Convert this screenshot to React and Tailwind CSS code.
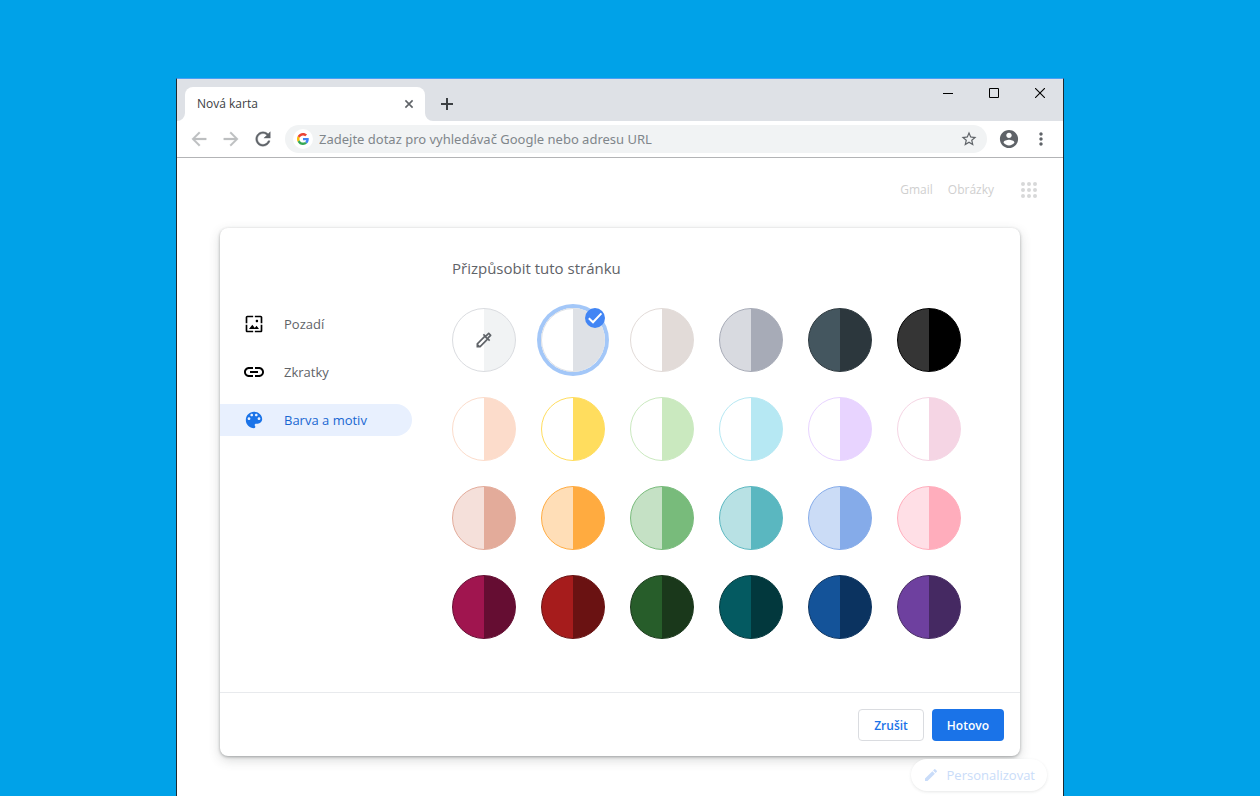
// App.jsx
import { useState } from "react";
import { MdEdit, MdLink, MdMoreVert, MdOutlineColorize, MdStarBorder, MdWallpaper } from "react-icons/md";

const SWATCHES = [
  { id: "custom", name: "Vlastní barva", left: "#ffffff", right: "#f1f3f4", border: "#dadce0" },
  { id: "default", name: "Výchozí barva", left: "#ffffff", right: "#dee1e6" },
  { id: "warm-grey", name: "Teplá šedá", left: "#ffffff", right: "#e2dbd8" },
  { id: "cool-grey", name: "Studená šedá", left: "#d8dae0", right: "#a7abb7" },
  { id: "midnight", name: "Půlnoční modrá", left: "#44565f", right: "#2c373d" },
  { id: "black", name: "Černá", left: "#353535", right: "#000000" },
  { id: "beige", name: "Béžová", left: "#ffffff", right: "#fcdccb" },
  { id: "yellow", name: "Žlutá", left: "#ffffff", right: "#ffdd5e" },
  { id: "light-green", name: "Světle zelená", left: "#ffffff", right: "#cae9bf" },
  { id: "light-aqua", name: "Světle tyrkysová", left: "#ffffff", right: "#b6e8f3" },
  { id: "light-purple", name: "Světle fialová", left: "#ffffff", right: "#e8d4ff" },
  { id: "light-pink", name: "Světle růžová", left: "#ffffff", right: "#f5d5e4" },
  { id: "rose", name: "Starorůžová", left: "#f5e0da", right: "#e3ab9a" },
  { id: "orange", name: "Oranžová", left: "#ffdeb7", right: "#ffab40" },
  { id: "green", name: "Zelená", left: "#c5e1c5", right: "#78bb7b" },
  { id: "aqua", name: "Tyrkysová", left: "#b8e1e4", right: "#5ab7c0" },
  { id: "blue", name: "Modrá", left: "#cbdcf6", right: "#85abe9" },
  { id: "pink", name: "Růžová", left: "#ffdfe6", right: "#ffadbc" },
  { id: "dark-pink", name: "Tmavě růžová", left: "#a0154f", right: "#650d32" },
  { id: "dark-red", name: "Tmavě červená", left: "#a61c1c", right: "#6a1212" },
  { id: "dark-green", name: "Tmavě zelená", left: "#275d2a", right: "#1a381b" },
  { id: "dark-aqua", name: "Tmavě tyrkysová", left: "#045a61", right: "#02383d" },
  { id: "dark-blue", name: "Tmavě modrá", left: "#145399", right: "#0b3360" },
  { id: "dark-purple", name: "Tmavě fialová", left: "#6e409f", right: "#452962" },
];

const PATHS = {
  back: "M20 11H7.83l5.59-5.59L12 4l-8 8 8 8 1.41-1.41L7.83 13H20v-2z",
  forward: "M12 4l-1.41 1.41L16.17 11H4v2h12.17l-5.58 5.59L12 20l8-8z",
  reload:
    "M17.65 6.35C16.2 4.9 14.21 4 12 4c-4.42 0-7.99 3.58-7.99 8s3.57 8 7.99 8c3.73 0 6.84-2.55 7.73-6h-2.08c-.82 2.33-3.04 4-5.65 4-3.31 0-6-2.69-6-6s2.69-6 6-6c1.66 0 3.14.69 4.22 1.78L13 11h7V4l-2.35 2.35z",
  profile:
    "M12 2C6.48 2 2 6.48 2 12s4.48 10 10 10 10-4.48 10-10S17.52 2 12 2zm0 3c1.66 0 3 1.34 3 3s-1.34 3-3 3-3-1.34-3-3 1.34-3 3-3zm0 14.2c-2.5 0-4.71-1.28-6-3.22.03-1.99 4-3.08 6-3.08 1.99 0 5.97 1.09 6 3.08-1.29 1.94-3.5 3.22-6 3.22z",
  palette:
    "M12 3c-4.97 0-9 4.03-9 9s4.03 9 9 9c.83 0 1.5-.67 1.5-1.5 0-.39-.15-.74-.39-1.01-.23-.26-.38-.61-.38-.99 0-.83.67-1.5 1.5-1.5H16c2.76 0 5-2.24 5-5 0-4.42-4.03-8-9-8zm-5.5 9c-.83 0-1.5-.67-1.5-1.5S5.67 9 6.5 9 8 9.67 8 10.5 7.33 12 6.5 12zm3-4C8.67 8 8 7.33 8 6.5S8.67 5 9.5 5s1.5.67 1.5 1.5S10.33 8 9.5 8zm5 0c-.83 0-1.5-.67-1.5-1.5S13.67 5 14.5 5s1.5.67 1.5 1.5S15.33 8 14.5 8zm3 4c-.83 0-1.5-.67-1.5-1.5S16.67 9 17.5 9s1.5.67 1.5 1.5-.67 1.5-1.5 1.5z",
};

function Icon({ name, stroke = 0 }) {
  return (
    <svg
      width="20"
      height="20"
      viewBox="1 1 22 22"
      fill="currentColor"
      stroke={stroke ? "currentColor" : "none"}
      strokeWidth={stroke}
      aria-hidden="true"
    >
      <path d={PATHS[name]} />
    </svg>
  );
}

const MENU = [
  { id: "background", label: "Pozadí", icon: <MdWallpaper size={20} /> },
  { id: "shortcuts", label: "Zkratky", icon: <MdLink size={24} /> },
  { id: "colors", label: "Barva a motiv", icon: <Icon name="palette" /> },
];

function GoogleLogo() {
  return (
    <svg width="12" height="12" viewBox="0 0 48 48" aria-hidden="true">
      <path fill="#EA4335" d="M24 9.5c3.54 0 6.71 1.22 9.21 3.6l6.85-6.85C35.9 2.38 30.47 0 24 0 14.62 0 6.51 5.38 2.56 13.22l7.98 6.19C12.43 13.72 17.74 9.5 24 9.5z" />
      <path fill="#4285F4" d="M46.98 24.55c0-1.57-.15-3.09-.38-4.55H24v9.02h12.94c-.58 2.96-2.26 5.48-4.78 7.18l7.73 6c4.51-4.18 7.09-10.36 7.09-17.65z" />
      <path fill="#FBBC05" d="M10.53 28.59c-.48-1.45-.76-2.99-.76-4.59s.27-3.14.76-4.59l-7.98-6.19C.92 16.46 0 20.12 0 24c0 3.88.92 7.54 2.56 10.78l7.97-6.19z" />
      <path fill="#34A853" d="M24 48c6.48 0 11.93-2.13 15.89-5.81l-7.73-6c-2.15 1.45-4.92 2.3-8.16 2.3-6.26 0-11.57-4.22-13.47-9.91l-7.98 6.19C6.51 42.62 14.62 48 24 48z" />
    </svg>
  );
}

function AppsDots() {
  return (
    <svg width="16" height="16" viewBox="0 0 16 16" fill="currentColor" aria-hidden="true">
      {[2, 8, 14].map((y) => [2, 8, 14].map((x) => <circle key={`${x}-${y}`} cx={x} cy={y} r="2" />))}
    </svg>
  );
}

function TabStrip() {
  return (
    <div className="flex h-[42px] items-start justify-between bg-[#dee1e6]">
      <div className="flex pt-2 pl-2">
        <div className="relative flex h-[34px] w-60 items-center justify-between rounded-t-lg bg-white pr-2.5 pl-3">
          <span className="text-xs text-[#3c4043]">Nová karta</span>
          <button aria-label="Zavřít kartu" className="grid size-3 place-items-center text-[#5f6368]">
            <svg width="10" height="10" viewBox="0 0 10 10" stroke="currentColor" strokeWidth="1.6">
              <path d="M1.4 1.4l7.2 7.2M8.6 1.4L1.4 8.6" />
            </svg>
          </button>
          {/* flared feet of the tab */}
          <svg className="absolute bottom-0 -left-2" width="8" height="8" viewBox="0 0 8 8" fill="#fff">
            <path d="M8 0v8H0a8 8 0 0 0 8-8z" />
          </svg>
          <svg className="absolute -right-2 bottom-0" width="8" height="8" viewBox="0 0 8 8" fill="#fff">
            <path d="M0 0v8h8a8 8 0 0 1-8-8z" />
          </svg>
        </div>
        <button aria-label="Nová karta" className="ml-2 grid h-[34px] w-7 place-items-center text-[#3c4043]">
          <svg width="12" height="12" viewBox="0 0 12 12" stroke="currentColor" strokeWidth="2">
            <path d="M6 0v12M0 6h12" />
          </svg>
        </button>
      </div>
      <div className="flex text-black">
        <button aria-label="Minimalizovat" className="grid h-7 w-[46px] place-items-center">
          <svg width="10" height="10" viewBox="0 0 10 10" fill="currentColor">
            <path d="M0 5h10v1H0z" />
          </svg>
        </button>
        <button aria-label="Maximalizovat" className="grid h-7 w-[46px] place-items-center">
          <svg width="10" height="10" viewBox="0 0 10 10" fill="none" stroke="currentColor">
            <path d="M.5.5h9v9h-9z" />
          </svg>
        </button>
        <button aria-label="Zavřít" className="grid h-7 w-[46px] place-items-center">
          <svg width="10" height="10" viewBox="0 0 10 10" stroke="currentColor" strokeWidth="1.1">
            <path d="M0 0l10 10M10 0L0 10" />
          </svg>
        </button>
      </div>
    </div>
  );
}

function Toolbar() {
  return (
    <div className="flex h-[37px] items-center gap-3 border-b border-[#b3b4b6] px-3 text-[#5f6368]">
      <button aria-label="Zpět" className="text-[#bdbfc1]"><Icon name="back" stroke={0.3} /></button>
      <button aria-label="Vpřed" className="text-[#bdbfc1]"><Icon name="forward" stroke={0.3} /></button>
      <button aria-label="Načíst znovu"><Icon name="reload" stroke={0.4} /></button>
      <div className="flex h-7 min-w-0 flex-1 items-center gap-1.5 rounded-full bg-[#f1f3f4] pr-[9px] pl-2">
        <span className="grid size-5 place-items-center rounded-full bg-white">
          <GoogleLogo />
        </span>
        <input
          type="text"
          aria-label="Adresní řádek"
          placeholder="Zadejte dotaz pro vyhledávač Google nebo adresu URL"
          className="min-w-0 flex-1 bg-transparent pt-0.5 font-['Noto_Sans','Open_Sans',sans-serif] text-[13px] outline-none placeholder:text-[#80868b]"
        />
        <button aria-label="Přidat do záložek"><MdStarBorder size={18} /></button>
      </div>
      <button aria-label="Profil"><Icon name="profile" /></button>
      <button aria-label="Nabídka"><MdMoreVert size={20} /></button>
    </div>
  );
}

function Swatch({ swatch, checked, onSelect }) {
  return (
    <label className="relative block size-16">
      <input
        type="radio"
        name="color"
        aria-label={swatch.name}
        checked={checked}
        onChange={() => onSelect(swatch.id)}
        className="block size-16 appearance-none rounded-full border checked:ring-4 checked:ring-[#a3c7f8]"
        style={{
          borderColor: swatch.border || swatch.right,
          backgroundImage: `linear-gradient(to right, ${swatch.left} 50%, ${swatch.right} 50%)`,
        }}
      />
      {swatch.id === "custom" && (
        <span className="pointer-events-none absolute inset-0 grid place-items-center text-[#5f6368]">
          <MdOutlineColorize size={20} />
        </span>
      )}
      {checked && (
        <svg className="absolute top-0 right-0" width="20" height="20" viewBox="0 0 20 20" aria-hidden="true">
          <circle cx="10" cy="10" r="10" fill="#4285f4" />
          <path d="M3.8 10.3l4.2 4L16.4 5.4" fill="none" stroke="#fff" strokeWidth="2" />
        </svg>
      )}
    </label>
  );
}

function CustomizeDialog() {
  const [page, setPage] = useState("colors");
  const [color, setColor] = useState("default");

  return (
    <section
      role="dialog"
      aria-labelledby="customize-title"
      className="mx-auto w-full max-w-[800px] rounded-lg bg-white shadow-[0_1px_3px_rgba(60,64,67,0.4),0_4px_12px_rgba(60,64,67,0.2)]"
    >
      <div className="flex min-h-[464px]">
        <nav className="flex w-48 shrink-0 flex-col gap-4 pt-20">
          {MENU.map((m) => (
            <button
              key={m.id}
              onClick={() => setPage(m.id)}
              className={`flex h-8 items-center rounded-r-full pl-[22px] text-left text-[13px] ${
                page === m.id ? "bg-[#e8f0fe] text-[#1967d2]" : "text-[#5f6368]"
              }`}
            >
              <span className={`mr-[18px] grid size-6 place-items-center ${page === m.id ? "text-[#1a73e8]" : "text-black"}`}>
                {m.icon}
              </span>
              <span className="pt-0.5">{m.label}</span>
            </button>
          ))}
        </nav>
        <div className="pt-7 pl-10">
          <h1 id="customize-title" className="mb-7 text-[15px] leading-6 text-[#5f6368]">
            Přizpůsobit tuto stránku
          </h1>
          <div role="radiogroup" aria-label="Barva a motiv" className="grid grid-cols-6 gap-[25px]">
            {SWATCHES.map((s) => (
              <Swatch key={s.id} swatch={s} checked={color === s.id} onSelect={setColor} />
            ))}
          </div>
        </div>
      </div>
      <div className="flex h-16 justify-end gap-2 border-t border-[#e8eaed] px-4 pt-4 text-xs font-semibold">
        <button className="h-8 rounded border border-[#dadce0] px-[15px] pt-0.5 text-[#1a73e8]">Zrušit</button>
        <button className="h-8 rounded bg-[#1a73e8] px-[15px] pt-0.5 text-white">Hotovo</button>
      </div>
    </section>
  );
}

export default function App() {
  return (
    <div className="flex min-h-screen flex-col bg-[#00a2e8] pt-[78px] pr-[196px] pl-44 font-['Open_Sans','Noto_Sans',sans-serif]">
      <div className="flex flex-1 flex-col border-x border-t border-x-[#1c2b33] border-t-[#4a9ff5] bg-white">
        <TabStrip />
        <Toolbar />
        <main className="flex flex-1 flex-col">
          <div className="mb-1.5 flex h-16 items-center justify-end pr-[26px] text-xs text-[#cfcfcf]">
            <a href="#gmail" className="mr-[15px]">Gmail</a>
            <a href="#obrazky" className="mr-[27px]">Obrázky</a>
            <button aria-label="Aplikace Google" className="text-[#d7d8d9]"><AppsDots /></button>
          </div>
          <CustomizeDialog />
          <button className="mt-[3px] mr-4 mb-1 flex h-8 items-center gap-2 self-end rounded-full bg-white px-3 text-[13px] text-[#c9dcf9] shadow-[0_1px_3px_rgba(60,64,67,0.12)]">
            <MdEdit size={16} />
            <span className="pt-0.5">Personalizovat</span>
          </button>
        </main>
      </div>
    </div>
  );
}
